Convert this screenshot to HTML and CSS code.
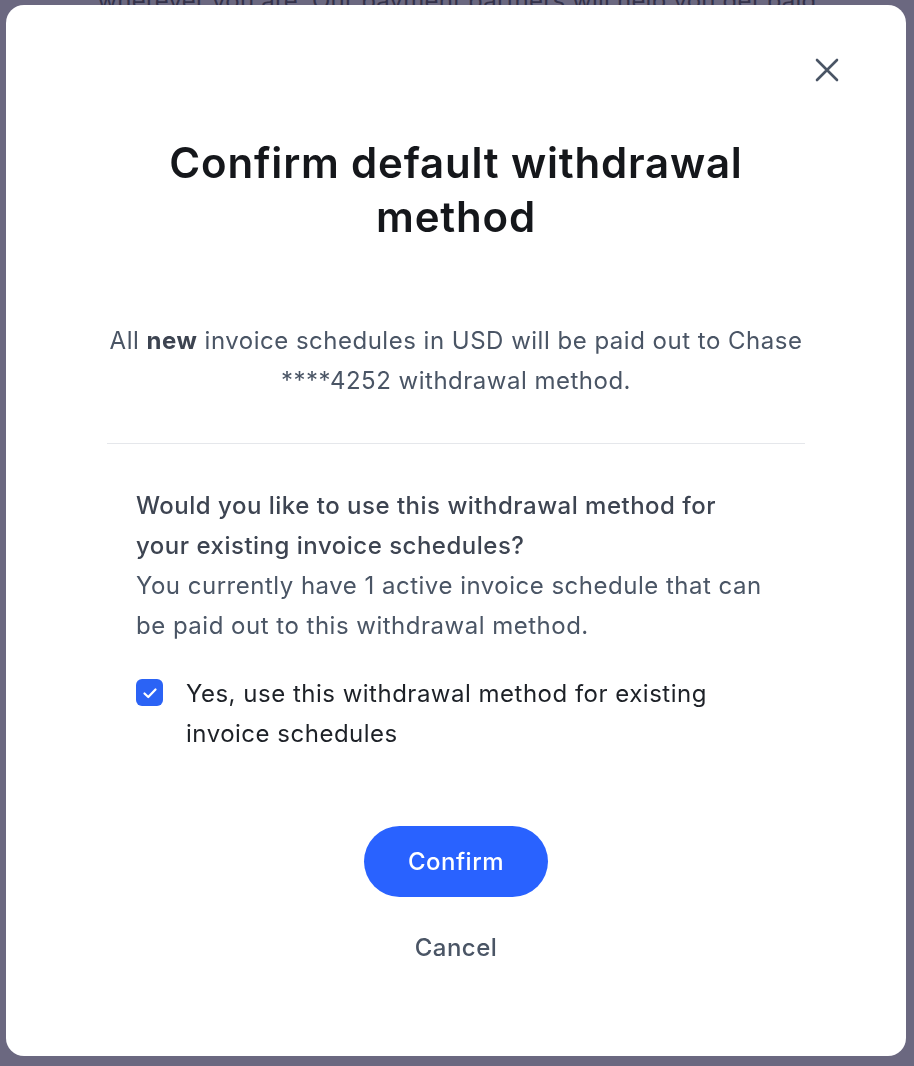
FILE: index.html
```html
<!DOCTYPE html>
<html lang="en">
<head>
<meta charset="utf-8">
<title>Confirm default withdrawal method</title>
<link rel="stylesheet" href="styles.css">
</head>
<body>
<div class="page">
  <p class="page-text">wherever you are. Our payment partners will help you get paid</p>
</div>
<div class="backdrop">
  <div class="modal" role="dialog" aria-labelledby="modal-title">
    <div class="modal-top">
      <button class="close" aria-label="Close">
        <svg viewBox="0 0 24 24" width="24" height="24" aria-hidden="true">
          <path d="M2 2 L22 22 M22 2 L2 22" stroke="#4a5565" stroke-width="2.6" stroke-linecap="round" fill="none"/>
        </svg>
      </button>
    </div>
    <h1 id="modal-title" class="title">Confirm default withdrawal method</h1>
    <div class="content">
      <p class="lead">All <strong>new</strong> invoice schedules in USD will be paid out to Chase ****4252 withdrawal method.</p>
      <hr class="divider">
      <div class="existing">
        <p class="question">Would you like to use this withdrawal method for your existing invoice schedules?</p>
        <p class="info">You currently have 1 active invoice schedule that can be paid out to this withdrawal method.</p>
        <label class="check-row">
          <span class="checkbox">
            <svg viewBox="0 0 16 16" width="20" height="20" aria-hidden="true">
              <path d="M3.6 8.4 L6.6 11.2 L12.4 5.2" stroke="#fff" stroke-width="1.8" stroke-linecap="round" stroke-linejoin="round" fill="none"/>
            </svg>
          </span>
          <span class="check-label">Yes, use this withdrawal method for existing invoice schedules</span>
        </label>
      </div>
      <div class="actions">
        <button class="btn-primary">Confirm</button>
        <button class="btn-link">Cancel</button>
      </div>
    </div>
  </div>
</div>
</body>
</html>
```
FILE: styles.css
```css
html, body {
  margin: 0;
  padding: 0;
}
body {
  background: #6b6880;
  font-family: Inter, "Noto Sans", sans-serif;
  height: 1066px;
  overflow: hidden;
}
.page {
  display: flex;
  justify-content: center;
}
.page-text {
  margin: -14px 0 0;
  font-size: 24px;
  line-height: 30px;
  color: #34324a;
  letter-spacing: 0.2px;
}
.backdrop {
  position: fixed;
  inset: 0;
  padding: 5px 8px 10px 6px;
  box-sizing: border-box;
}
.modal {
  background: #fff;
  border-radius: 18px;
  height: 1051px;
  box-sizing: border-box;
  display: flex;
  flex-direction: column;
}
.modal-top {
  display: flex;
  justify-content: flex-end;
  padding: 53px 67px 0 0;
  height: 80px;
  box-sizing: border-box;
}
.close {
  width: 24px;
  height: 24px;
  padding: 0;
  border: 0;
  background: none;
  cursor: pointer;
  display: block;
}
.close svg { display: block; }
.title {
  margin: 51px auto 0;
  width: 640px;
  text-align: center;
  font-family: Inter, "Noto Sans", sans-serif;
  font-weight: 600;
  font-size: 42px;
  line-height: 54px;
  color: #15171b;
  letter-spacing: 0.8px;
}
.content {
  padding: 0 101px;
  display: flex;
  flex-direction: column;
}
.lead {
  margin: 77px 0 0;
  text-align: center;
  font-size: 24px;
  line-height: 40px;
  letter-spacing: 0.5px;
  color: #4a5565;
}
.lead strong {
  font-weight: 700;
  color: #3d4451;
}
.divider {
  margin: 42px 0 0;
  border: 0;
  border-top: 1px solid #e5e7eb;
  height: 0;
}
.existing {
  padding: 42px 29px 0;
}
.question {
  margin: 0;
  font-size: 24px;
  line-height: 40px;
  letter-spacing: 0.5px;
  font-weight: 500;
  color: #3d4451;
}
.info {
  margin: 0;
  font-size: 24px;
  line-height: 40px;
  letter-spacing: 0.5px;
  color: #4a5565;
}
.check-row {
  margin-top: 28px;
  display: flex;
  align-items: flex-start;
  gap: 23px;
}
.checkbox {
  flex: none;
  width: 27px;
  height: 27px;
  margin-top: 5px;
  border-radius: 6px;
  background: #2b63f5;
  display: flex;
  align-items: center;
  justify-content: center;
}
.checkbox svg { display: block; }
.check-label {
  font-size: 24px;
  line-height: 40px;
  letter-spacing: 0.5px;
  color: #1d2127;
}
.actions {
  margin-top: 72px;
  display: flex;
  flex-direction: column;
  align-items: center;
}
.btn-primary {
  width: 184px;
  height: 71px;
  border: 0;
  border-radius: 36px;
  background: #2962ff;
  color: #fff;
  font-family: Inter, "Noto Sans", sans-serif;
  font-size: 24px;
  letter-spacing: 0.5px;
  font-weight: 500;
  cursor: pointer;
}
.btn-link {
  margin-top: 34px;
  border: 0;
  background: none;
  padding: 0;
  font-family: Inter, "Noto Sans", sans-serif;
  font-size: 24px;
  line-height: 34px;
  letter-spacing: 0.5px;
  font-weight: 500;
  color: #4a5565;
  cursor: pointer;
}
```
